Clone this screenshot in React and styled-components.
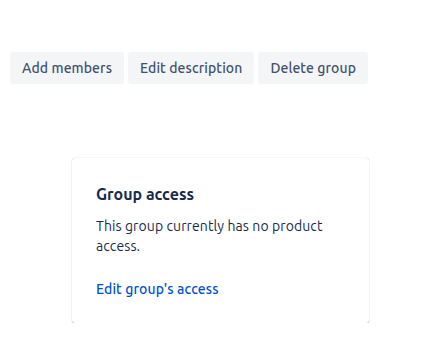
import React from 'react';
import styled, { createGlobalStyle } from 'styled-components';

const GlobalStyle = createGlobalStyle`
  body {
    margin: 0;
    background: #ffffff;
    font-family: Ubuntu, "Noto Sans", "Open Sans", sans-serif;
    color: #172b4d;
  }
`;

const Page = styled.div`
  padding: 52px 10px 0 10px;
`;

const Toolbar = styled.div`
  display: flex;
  gap: 4px;
`;

const Button = styled.button`
  height: 32px;
  padding: 0 12px;
  background-color: #f4f5f7;
  color: #42526e;
  border: none;
  border-radius: 3px;
  font-family: inherit;
  font-size: 14px;
  font-weight: 500;
  letter-spacing: 0.08px;
  cursor: pointer;
`;

const Card = styled.section`
  width: 249px;
  margin: 74px 0 0 62px;
  padding: 26px 24px 24px 24px;
  border-radius: 3px;
  background: #fff;
  box-shadow: 0 1px 1px rgba(9, 30, 66, 0.25), 0 0 1px rgba(9, 30, 66, 0.31);
`;

const Title = styled.h3`
  margin: 0 0 12px 0;
  font-size: 16px;
  line-height: 20px;
  font-weight: 600;
  color: #172b4d;
`;

const Text = styled.p`
  margin: 0 0 23px 0;
  font-size: 14px;
  line-height: 20px;
  letter-spacing: 0.1px;
`;

const Link = styled.a`
  font-size: 14px;
  line-height: 20px;
  color: #0052cc;
  text-decoration: none;
  font-weight: 500;
  letter-spacing: 0.1px;
`;

export default function App() {
  return (
    <>
      <GlobalStyle />
      <Page>
        <Toolbar>
          <Button>Add members</Button>
          <Button>Edit description</Button>
          <Button>Delete group</Button>
        </Toolbar>
        <Card>
          <Title>Group access</Title>
          <Text>This group currently has no product access.</Text>
          <Link href="#">Edit group's access</Link>
        </Card>
      </Page>
    </>
  );
}
